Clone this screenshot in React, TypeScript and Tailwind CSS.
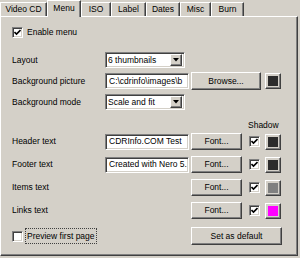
import React from 'react';

const raised =
  'border border-t-white border-l-white border-r-[#404040] border-b-[#404040] shadow-[inset_-1px_-1px_0_#808080]';
const sunken =
  'border border-t-[#808080] border-l-[#808080] border-r-white border-b-white shadow-[inset_1px_1px_0_#404040,inset_-1px_-1px_0_#d4d0c8]';

const tabs = ['Video CD', 'Menu', 'ISO', 'Label', 'Dates', 'Misc', 'Burn'];
const tabWidths = ['w-[47px]', 'w-[34px]', 'w-[30px]', 'w-[35px]', 'w-[34px]', 'w-[31px]', 'w-[33px]'];

function Check({ checked }: { checked: boolean }) {
  return (
    <div className={`w-[11px] h-[11px] bg-white flex items-center justify-center ${sunken}`}>
      {checked && (
        <svg width="7" height="7" viewBox="0 0 7 7">
          <path d="M0.5 3 L2.5 5 L6.5 1" stroke="#000" strokeWidth="1.6" fill="none" />
        </svg>
      )}
    </div>
  );
}

function Swatch({ color }: { color: string }) {
  return (
    <div className={`w-[16px] h-[16px] p-[2px] bg-[#d4d0c8] ${raised}`}>
      <div className={`w-full h-full ${color}`} />
    </div>
  );
}

function Combo({ value }: { value: string }) {
  return (
    <div className={`w-[80px] h-[16px] bg-white flex items-center pl-[2px] pr-[2px] ${sunken}`}>
      <span className="flex-1 truncate">{value}</span>
      <div className={`w-[12px] h-[12px] bg-[#d4d0c8] flex items-center justify-center ${raised}`}>
        <svg width="6" height="4" viewBox="0 0 6 4">
          <path d="M0 0 H6 L3 3.5 Z" fill="#000" />
        </svg>
      </div>
    </div>
  );
}

function TextBox({ value }: { value: string }) {
  return (
    <div className={`w-[84px] h-[16px] bg-white flex items-center pl-[3px] overflow-hidden whitespace-nowrap ${sunken}`}>
      {value}
    </div>
  );
}

function Button({ label, w }: { label: string; w: string }) {
  return (
    <div className={`${w} h-[17px] bg-[#d4d0c8] flex items-center justify-center ${raised}`}>{label}</div>
  );
}

function Label({ text }: { text: string }) {
  return <div className="w-[93px]">{text}</div>;
}

function TextRow({ label, value, color }: { label: string; value?: string; color: string }) {
  return (
    <div className="flex items-center h-[17px]">
      <Label text={label} />
      <div className="w-[86px]">{value && <TextBox value={value} />}</div>
      <Button label="Font..." w="w-[51px]" />
      <div className="ml-[7px]">
        <Check checked />
      </div>
      <div className="ml-[5px]">
        <Swatch color={color} />
      </div>
    </div>
  );
}

export default function App() {
  return (
    <div
      className="w-[300px] h-[258px] bg-[#d4d0c8] text-[8.5px] text-black leading-none"
      style={{ fontFamily: '"Liberation Sans", Arial, sans-serif' }}
    >
      <div className="flex items-end h-[16px]">
        {tabs.map((t, i) =>
          t === 'Menu' ? (
            <div
              key={t}
              className={`${tabWidths[i]} h-[17px] -mb-px relative z-10 bg-[#d4d0c8] border-t border-l border-t-white border-l-white border-r border-r-[#404040] shadow-[inset_-1px_0_0_#808080] flex items-center justify-center pb-[2px]`}
            >
              {t}
            </div>
          ) : (
            <div
              key={t}
              className={`${tabWidths[i]} h-[14px] border-t border-l border-t-white border-l-white border-r border-r-[#404040] shadow-[inset_-1px_0_0_#808080] flex items-center justify-center`}
            >
              {t}
            </div>
          )
        )}
      </div>
      <div className={`w-[298px] h-[240px] pl-[11px] flex flex-col ${raised}`}>
        <div className="mt-[9px] flex items-center h-[13px] gap-[4px]">
          <Check checked />
          <span>Enable menu</span>
        </div>
        <div className="mt-[13px] flex items-center h-[16px]">
          <Label text="Layout" />
          <Combo value="6 thumbnails" />
        </div>
        <div className="mt-[4px] flex items-center h-[18px]">
          <Label text="Background picture" />
          <div className="w-[86px]">
            <TextBox value="C:\cdrinfo\images\b" />
          </div>
          <Button label="Browse..." w="w-[70px] h-[18px]" />
          <div className="ml-[4px]">
            <Swatch color="bg-[#2c2c2c]" />
          </div>
        </div>
        <div className="mt-[4px] flex items-center h-[16px]">
          <Label text="Background mode" />
          <Combo value="Scale and fit" />
        </div>
        <div className="mt-[9px] h-[12px] flex items-center">
          <span className="ml-[236px]">Shadow</span>
        </div>
        <div className="mt-[2px]">
          <TextRow label="Header text" value="CDRInfo.COM Test" color="bg-[#2c2c2c]" />
        </div>
        <div className="mt-[6px]">
          <TextRow label="Footer text" value="Created with Nero 5." color="bg-[#2c2c2c]" />
        </div>
        <div className="mt-[6px]">
          <TextRow label="Items text" color="bg-[#808080]" />
        </div>
        <div className="mt-[6px]">
          <TextRow label="Links text" color="bg-[#ff00ff]" />
        </div>
        <div className="mt-[8px] flex items-center h-[18px]">
          <div className="w-[179px] flex items-center gap-[2px]">
            <Check checked={false} />
            <span className="border border-dotted border-[#404040] px-[1px] py-[3px]">Preview first page</span>
          </div>
          <div className={`w-[91px] h-[18px] bg-[#d4d0c8] flex items-center justify-center ${raised}`}>
            Set as default
          </div>
        </div>
      </div>
    </div>
  );
}
